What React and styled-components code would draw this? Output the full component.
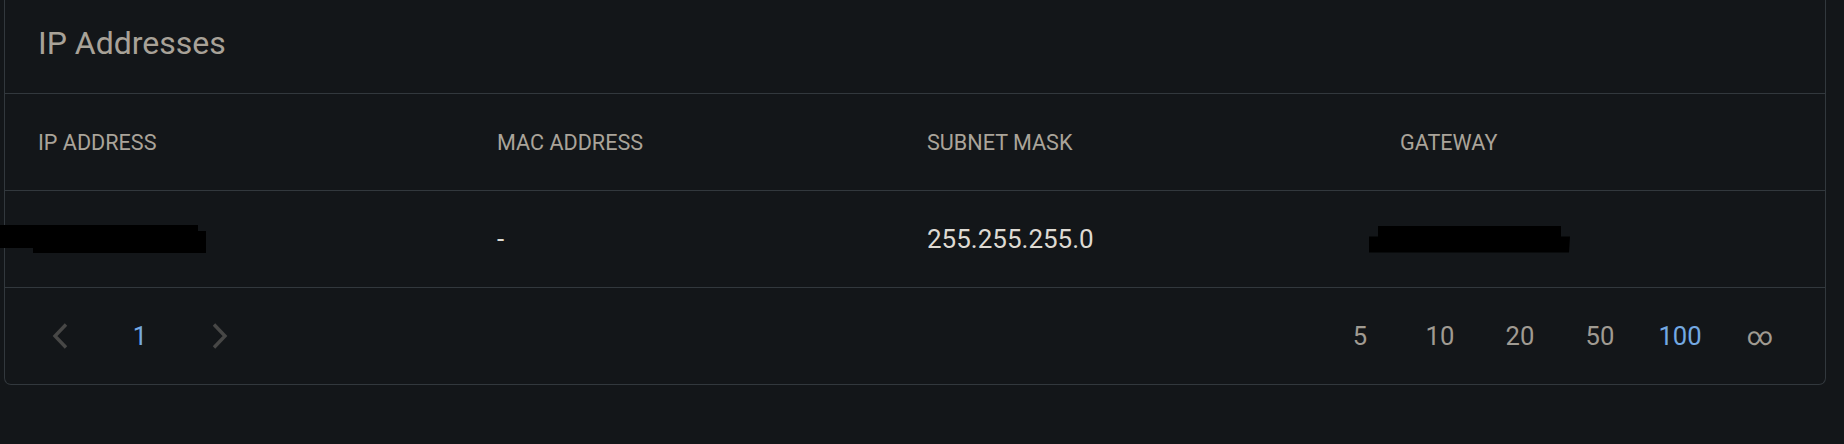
import React from "react";
import styled, { createGlobalStyle } from "styled-components";

const GlobalStyle = createGlobalStyle`
  html, body {
    margin: 0;
    padding: 0;
    background: #131619;
  }
  body {
    font-family: Roboto, "Liberation Sans", Arial, sans-serif;
    color: #a8a298;
  }
`;

const Page = styled.div`
  padding: 0 18px 60px 4px;
`;

const Card = styled.section`
  border: 1px solid #32383d;
  border-top: none;
  border-radius: 0 0 7px 7px;
  background: #131619;
`;

const TitleBar = styled.div`
  height: 94px;
  box-sizing: border-box;
  padding: 27px 0 0 33px;
  border-bottom: 1px solid #32383d;
`;

const Title = styled.h2`
  margin: 0;
  font-size: 32px;
  line-height: 32px;
  font-weight: 400;
  color: #a8a298;
`;

const Row = styled.div`
  display: grid;
  grid-template-columns: 459px 430px 473px 1fr;
  height: 96px;
  border-bottom: 1px solid #32383d;
`;

const Cell = styled.div`
  display: flex;
  align-items: center;
  padding-left: 33px;
  font-size: ${(p) => (p.$head ? "21.6px" : "26px")};
  color: ${(p) => (p.$head ? "#aaa49a" : "#dedad3")};
  white-space: nowrap;
`;

const Redacted = styled.span`
  display: inline-block;
  width: ${(p) => p.$w}px;
  height: ${(p) => p.$h}px;
  margin-left: ${(p) => p.$shift}px;
  background: #000;
  clip-path: ${(p) => p.$shape};
`;

const Footer = styled.div`
  display: flex;
  align-items: center;
  justify-content: space-between;
  height: 96px;
  padding: 0 25px 0 15px;
`;

const Group = styled.div`
  display: flex;
  align-items: center;
`;

const PageButton = styled.button`
  width: 80px;
  height: 48px;
  display: flex;
  align-items: center;
  justify-content: center;
  background: none;
  border: none;
  padding: 0;
  font-family: inherit;
  font-size: 25.6px;
  color: ${(p) => (p.$active ? "#74a9e2" : "#a09b92")};
  cursor: pointer;
`;

const Chevron = ({ dir }) => (
  <svg width="16" height="26" viewBox="0 0 16 26">
    <polyline
      points={dir === "left" ? "14,1.5 3,13 14,24.5" : "2,1.5 13,13 2,24.5"}
      fill="none"
      stroke="#474746"
      strokeWidth="3.4"
    />
  </svg>
);

const ipShape =
  "polygon(0 0, 198px 0, 198px 6px, 206px 6px, 206px 100%, 33px 100%, 33px 23px, 0 23px)";
const gwShape =
  "polygon(9px 0, 192px 0, 192px 11px, 201px 11px, 200px 100%, 0 100%, 0 11px, 9px 11px)";

const sizes = ["5", "10", "20", "50", "100", "∞"];

export default function App() {
  return (
    <Page>
      <GlobalStyle />
      <Card>
        <TitleBar>
          <Title>IP Addresses</Title>
        </TitleBar>
        <Row>
          <Cell $head>IP ADDRESS</Cell>
          <Cell $head>MAC ADDRESS</Cell>
          <Cell $head>SUBNET MASK</Cell>
          <Cell $head>GATEWAY</Cell>
        </Row>
        <Row>
          <Cell>
            <Redacted $w={206} $h={28} $shift={-38} $shape={ipShape} />
          </Cell>
          <Cell>-</Cell>
          <Cell>255.255.255.0</Cell>
          <Cell>
            <Redacted $w={201} $h={27} $shift={-31} $shape={gwShape} />
          </Cell>
        </Row>
        <Footer>
          <Group>
            <PageButton aria-label="Previous page">
              <Chevron dir="left" />
            </PageButton>
            <PageButton $active>1</PageButton>
            <PageButton aria-label="Next page">
              <Chevron dir="right" />
            </PageButton>
          </Group>
          <Group>
            {sizes.map((s) => (
              <PageButton key={s} $active={s === "100"}>
                {s}
              </PageButton>
            ))}
          </Group>
        </Footer>
      </Card>
    </Page>
  );
}
